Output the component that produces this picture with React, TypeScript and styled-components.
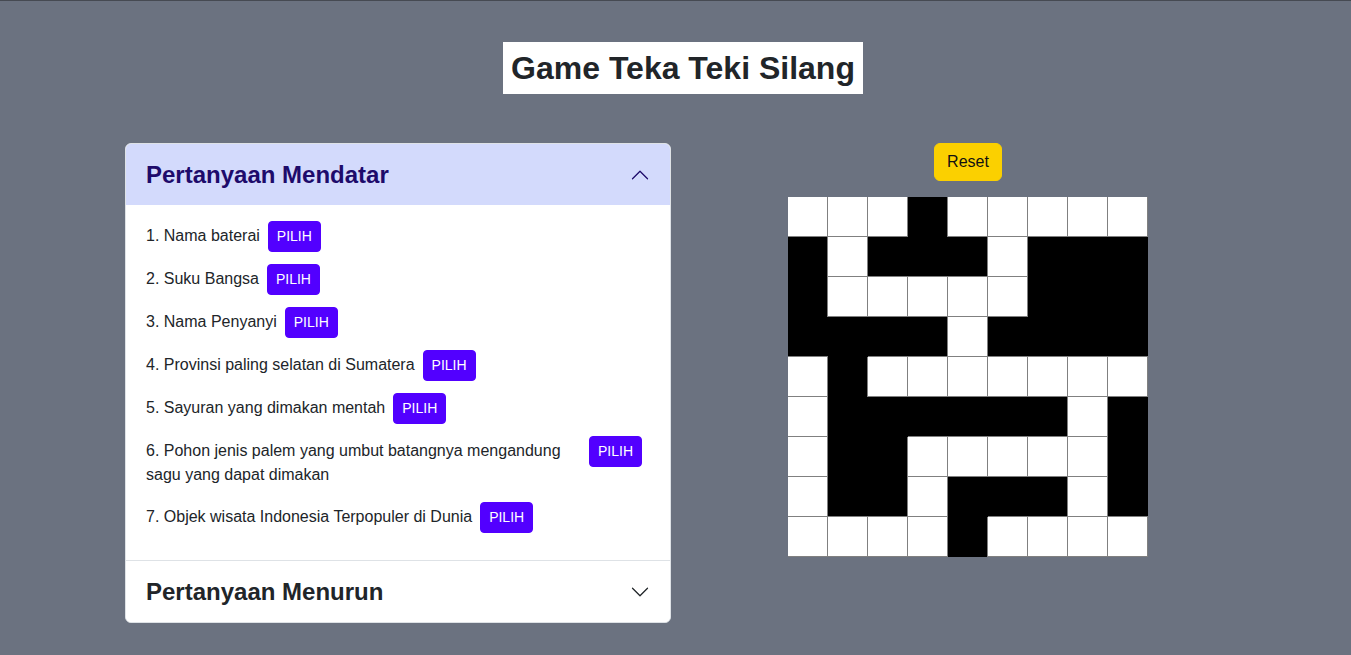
import React from "react";
import styled, { createGlobalStyle, css } from "styled-components";

const GlobalStyle = createGlobalStyle`
  html, body { margin: 0; padding: 0; }
  body {
    font-family: "Liberation Sans", Arial, sans-serif;
    color: #212529;
    background: #6b7280;
  }
  * { box-sizing: border-box; }
`;

const Page = styled.div`
  min-height: 100vh;
  background: #6b7280;
  border-top: 1px solid #464a52;
  padding: 41px 110px 0 125px;
`;

const TitleBar = styled.div`
  display: flex;
  justify-content: center;
`;

const Title = styled.h1`
  margin: 0;
  background: #ffffff;
  padding: 8px;
  font-size: 32px;
  line-height: 36px;
  font-weight: 700;
  color: #212529;
`;

const Row = styled.div`
  display: flex;
  align-items: flex-start;
  gap: 20px;
  margin-top: 49px;
`;

const Card = styled.div`
  width: 546px;
  flex: none;
  background: #ffffff;
  border: 1px solid #dee2e6;
  border-radius: 6px;
  overflow: hidden;
`;

const Header = styled.div<{ $active?: boolean; $divider?: boolean }>`
  display: flex;
  align-items: center;
  justify-content: space-between;
  padding: 16px 20px;
  font-size: 24px;
  line-height: 29px;
  font-weight: 700;
  background: ${(p) => (p.$active ? "#d3dafc" : "#ffffff")};
  color: ${(p) => (p.$active ? "#1e0b6b" : "#212529")};
  ${(p) =>
    p.$divider &&
    css`
      border-top: 1px solid #dee2e6;
    `}
`;

const Chevron = styled.svg`
  width: 20px;
  height: 20px;
  flex: none;
`;

const Body = styled.div`
  padding: 16px 20px 15px;
`;

const Question = styled.div`
  display: flex;
  align-items: baseline;
  margin-bottom: 12px;
  font-size: 16px;
  line-height: 24px;
`;

const QuestionText = styled.span`
  flex: 0 1 auto;
  padding-bottom: 3px;
`;

const PickButton = styled.button`
  flex: none;
  margin: 0 8px;
  padding: 4px 8px;
  font-family: "Liberation Sans", Arial, sans-serif;
  font-size: 14px;
  line-height: 21px;
  color: #ffffff;
  background: #5200ff;
  border: 1px solid #5200ff;
  border-radius: 4px;
  cursor: pointer;
`;

const Side = styled.div`
  flex: 1;
  display: flex;
  flex-direction: column;
  align-items: center;
  gap: 16px;
  padding-left: 4px;
`;

const ResetButton = styled.button`
  padding: 6px 12px;
  font-family: "Liberation Sans", Arial, sans-serif;
  font-size: 16px;
  line-height: 24px;
  color: #111111;
  background: #fbd000;
  border: 1px solid #fbd000;
  border-radius: 6px;
  cursor: pointer;
`;

const Board = styled.div`
  display: grid;
  grid-template-columns: repeat(9, 40px);
  grid-auto-rows: 40px;
`;

const Cell = styled.div<{ $black: boolean; $top: boolean; $left: boolean }>`
  background: ${(p) => (p.$black ? "#000000" : "#ffffff")};
  ${(p) =>
    !p.$black &&
    css`
      box-shadow: inset -1px -1px 0 #808080
        ${!p.$left ? ", -1px 0 0 #808080" : ""}
        ${!p.$top ? ", 0 -1px 0 #808080" : ""};
    `}
`;

const layout = [
  "WWWBWWWWW",
  "BWBBBWBBB",
  "BWWWWWBBB",
  "BBBBWBBBB",
  "WBWWWWWWW",
  "WBBBBBBWB",
  "WBBWWWWWB",
  "WBBWBBBWB",
  "WWWWBWWWW",
];

const questions = [
  "1. Nama baterai",
  "2. Suku Bangsa",
  "3. Nama Penyanyi",
  "4. Provinsi paling selatan di Sumatera",
  "5. Sayuran yang dimakan mentah",
  "6. Pohon jenis palem yang umbut batangnya mengandung sagu yang dapat dimakan",
  "7. Objek wisata Indonesia Terpopuler di Dunia",
];

const ChevronIcon = ({ up, color }: { up?: boolean; color: string }) => (
  <Chevron viewBox="0 0 16 16" fill="none">
    <path
      d={up ? "M2 11L8 5L14 11" : "M2 5L8 11L14 5"}
      stroke={color}
      strokeLinecap="round"
      strokeLinejoin="round"
    />
  </Chevron>
);

export default function App() {
  return (
    <>
      <GlobalStyle />
      <Page>
        <TitleBar>
          <Title>Game Teka Teki Silang</Title>
        </TitleBar>
        <Row>
          <Card>
            <Header $active>
              <span>Pertanyaan Mendatar</span>
              <ChevronIcon up color="#1e0b6b" />
            </Header>
            <Body>
              {questions.map((q) => (
                <Question key={q}>
                  <QuestionText>{q}</QuestionText>
                  <PickButton>PILIH</PickButton>
                </Question>
              ))}
            </Body>
            <Header $divider>
              <span>Pertanyaan Menurun</span>
              <ChevronIcon color="#212529" />
            </Header>
          </Card>
          <Side>
            <ResetButton>Reset</ResetButton>
            <Board>
              {layout.map((row, r) =>
                row
                  .split("")
                  .map((c, i) => (
                    <Cell
                      key={`${r}-${i}`}
                      $black={c === "B"}
                      $top={r === 0}
                      $left={i === 0}
                    />
                  ))
              )}
            </Board>
          </Side>
        </Row>
      </Page>
    </>
  );
}
